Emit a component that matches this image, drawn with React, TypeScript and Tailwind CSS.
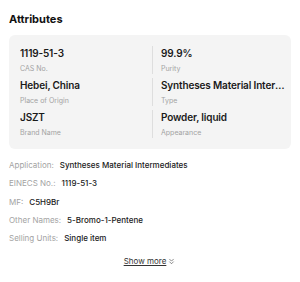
import { ChevronsDown } from "lucide-react";

type Attr = {
  value: string;
  label: string;
};

const attrs: Attr[] = [
  { value: "1119-51-3", label: "CAS No." },
  { value: "99.9%", label: "Purity" },
  { value: "Hebei, China", label: "Place of Origin" },
  { value: "Syntheses Material Intermediates", label: "Type" },
  { value: "JSZT", label: "Brand Name" },
  { value: "Powder, liquid", label: "Appearance" },
];

const details = [
  { label: "Application:", value: "Syntheses Material Intermediates" },
  { label: "EINECS No.:", value: "1119-51-3" },
  { label: "MF:", value: "C5H9Br" },
  { label: "Other Names:", value: "5-Bromo-1-Pentene" },
  { label: "Selling Units:", value: "Single item" },
];

export default function App() {
  return (
    <div
      className="w-[300px] h-[282px] bg-white px-[9px] pt-[12px]"
      style={{ fontFamily: "Inter, 'Liberation Sans', sans-serif" }}
    >
      <h2 className="text-[11px] leading-[14px] font-bold text-[#111]">
        Attributes
      </h2>

      <div className="mt-[9px] rounded-[6px] bg-[#f4f4f4] pl-[11px] pr-[3px] pt-[11px] pb-[11px]">
        <div className="grid grid-cols-[132px_1fr] gap-y-[4px]">
          {attrs.map((a, i) => (
            <div
              key={a.label}
              className={
                i % 2 === 1
                  ? "min-w-0 border-l border-[#dedede] pl-[8px]"
                  : "min-w-0 pr-[8px]"
              }
            >
              <div className="truncate text-[10px] leading-[14px] font-semibold tracking-[-0.15px] text-[#1a1a1a]">
                {a.value}
              </div>
              <div className="mt-[4px] text-[7px] leading-[10px] text-[#a3a3a3]">
                {a.label}
              </div>
            </div>
          ))}
        </div>
      </div>

      <div className="mt-[10px] flex flex-col gap-[6.25px]">
        {details.map((d) => (
          <div key={d.label} className="flex text-[8px] leading-[12px]">
            <span className="text-[#a3a3a3]">{d.label}</span>
            <span className="ml-[6px] font-medium text-[#1a1a1a]">
              {d.value}
            </span>
          </div>
        ))}
      </div>

      <div className="mt-[11px] flex items-center justify-center text-[8px] leading-[12px] text-[#333]">
        <span className="underline">Show more</span>
        <ChevronsDown className="ml-[1px] h-[9px] w-[9px]" strokeWidth={1.5} />
      </div>
    </div>
  );
}
